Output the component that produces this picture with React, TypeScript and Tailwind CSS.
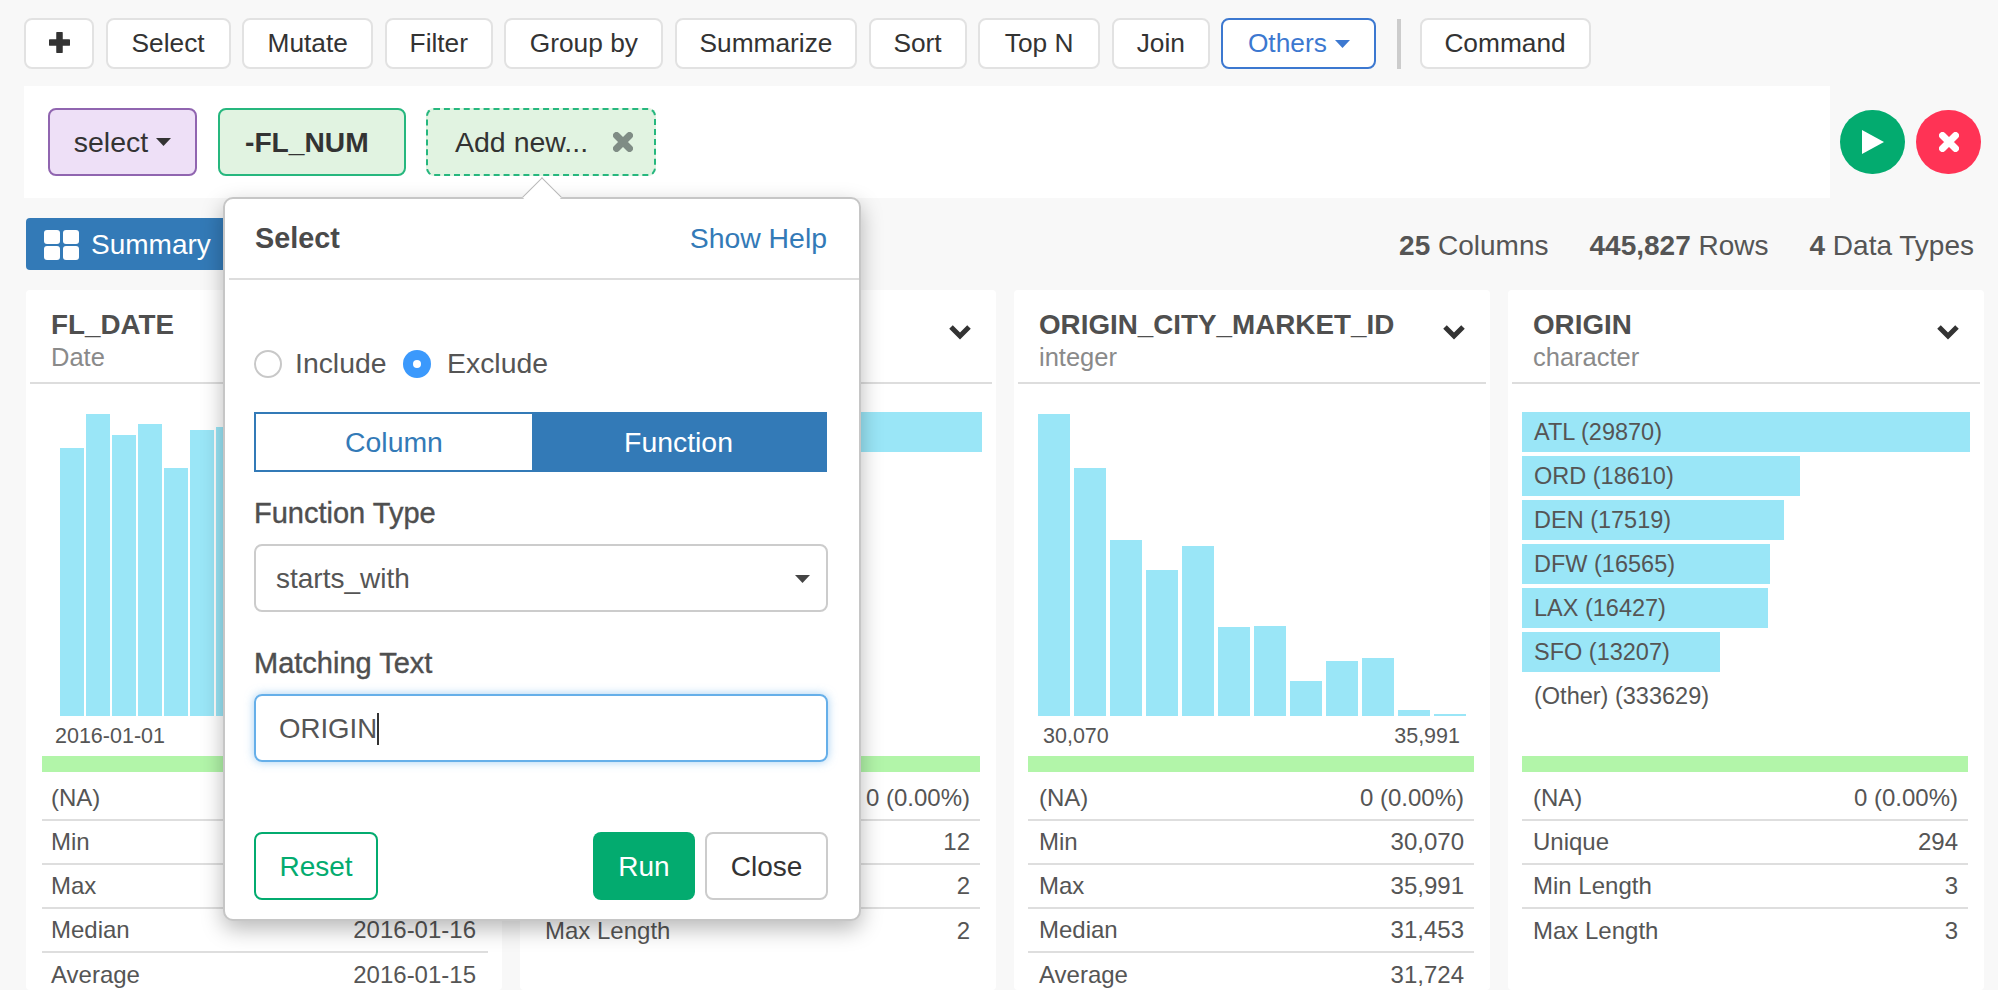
import React from "react";

const toolbar: [string, string][] = [
  ["Select", "w-[125px]"],
  ["Mutate", "w-[131px]"],
  ["Filter", "w-[108px]"],
  ["Group by", "w-[159px]"],
  ["Summarize", "w-[182px]"],
  ["Sort", "w-[98px]"],
  ["Top N", "w-[122px]"],
  ["Join", "w-[98px]"],
];

function Chevron() {
  return (
    <svg width="24" height="16" viewBox="0 0 24 16" className="shrink-0">
      <polyline points="3,3 12,12 21,3" fill="none" stroke="#333" strokeWidth="5" />
    </svg>
  );
}

function Caret({ color = "#333", w = 15, h = 8 }: { color?: string; w?: number; h?: number }) {
  return (
    <svg width={w} height={h} viewBox="0 0 15 8" className="inline-block">
      <polygon points="0,0 15,0 7.5,8" fill={color} />
    </svg>
  );
}

function Times({ color }: { color: string }) {
  return (
    <svg width="20" height="20" viewBox="0 0 20 20">
      <path d="M3.5 3.5 L16.5 16.5 M16.5 3.5 L3.5 16.5" stroke={color} strokeWidth="7" strokeLinecap="round" />
    </svg>
  );
}

function Card({
  title,
  type,
  chart,
  low,
  high,
  rows,
  first = false,
}: {
  title: string;
  type: string;
  chart: React.ReactNode;
  low?: string;
  high?: string;
  rows: [string, string][];
  first?: boolean;
}) {
  const inset = first ? "ml-[12px] mr-[10px]" : "ml-[10px] mr-[12px]";
  return (
    <div className="w-[476px] h-[700px] shrink-0 bg-white rounded-[4px] px-[4px]">
      <div className="h-[94px] border-b-2 border-[#dddddd] flex items-start justify-between pl-[21px] pr-[20px]">
        <div className="pt-[18px]">
          <div className="text-[27.8px] leading-[34px] font-bold text-[#4f4f4f]">{title}</div>
          <div className="text-[25.5px] leading-[31px] text-[#8a8a8a]">{type}</div>
        </div>
        <div className="pt-[34px]">
          <Chevron />
        </div>
      </div>
      <div className="h-[302px] mt-[30px] px-[10px] flex flex-col">{chart}</div>
      <div className="h-[40px] pl-[25px] pr-[26px] flex items-center justify-between text-[21.5px] text-[#555555]">
        <span>{low}</span>
        <span>{high}</span>
      </div>
      <div className={`${inset} h-[16px] bg-[#b2f5a9]`} />
      <div className={`${inset} mt-[5px]`}>
        {rows.map(([k, v]) => (
          <div
            key={k}
            className={`h-[44px] border-b-2 border-[#dedede] last:border-b-0 flex items-center justify-between text-[24px] text-[#555555] ${first ? "pl-[9px] pr-[12px]" : "pl-[11px] pr-[10px]"}`}
          >
            <span>{k}</span>
            <span>{v}</span>
          </div>
        ))}
      </div>
    </div>
  );
}

function Histogram({
  bars,
  width,
  gap,
}: {
  bars: number[];
  width: string;
  gap: string;
}) {
  return (
    <div className={`h-full flex items-end ${gap}`}>
      {bars.map((h, i) => (
        <div key={i} className={`${width} bg-[#9ae6f7]`} style={{ height: h }} />
      ))}
    </div>
  );
}

function HBars({ items, other }: { items: [string, number][]; other?: string }) {
  return (
    <div className="-mt-[2px] flex flex-col gap-[4px]">
      {items.map(([label, w]) => (
        <div
          key={label}
          className="h-[40px] bg-[#9ae6f7] flex items-center pl-[12px] pt-[1px] text-[23.5px] text-[#555555] whitespace-nowrap"
          style={{ width: w }}
        >
          {label}
        </div>
      ))}
      {other ? (
        <div className="h-[40px] flex items-center pl-[12px] pt-[1px] text-[23.5px] text-[#555555]">{other}</div>
      ) : null}
    </div>
  );
}

function Popover() {
  return (
    <div className="absolute left-[223px] top-[197px] w-[638px] h-[724px] bg-white border-2 border-[#c6c6c6] rounded-[10px] shadow-[0_8px_22px_rgba(0,0,0,0.28)] text-[#555555]">
      <div className="absolute left-[303px] -top-[16px] w-[28px] h-[28px] rotate-45 bg-white border-l border-t border-[#b8b8b8]" />
      <div className="relative h-[81px] border-b-2 border-[#dddddd] ml-[4px] flex items-center justify-between pl-[26px] pr-[32px]">
        <span className="text-[28.8px] font-bold text-[#4a4a4a]">Select</span>
        <span className="text-[28.4px] text-[#337ab7]">Show Help</span>
      </div>
      <div className="px-[29px]">
        <div className="mt-[68px] h-[30px] flex items-center text-[28.4px]">
          <span className="w-[28px] h-[28px] mt-[2px] rounded-full border-2 border-[#c8c8c8] bg-white" />
          <span className="ml-[13px] w-[108px]">Include</span>
          <span className="w-[28px] h-[28px] mt-[2px] rounded-full bg-[#3b99fc] flex items-center justify-center">
            <span className="w-[8px] h-[8px] rounded-full bg-white" />
          </span>
          <span className="ml-[16px]">Exclude</span>
        </div>
        <div className="mt-[34px] w-[573px] h-[60px] flex text-[28.4px] border-2 border-[#337ab7]">
          <div className="w-[276px] flex items-center justify-center text-[#337ab7] bg-white">Column</div>
          <div className="flex-1 flex items-center justify-center text-white bg-[#337ab7]">Function</div>
        </div>
        <div className="mt-[22px] h-[38px] flex items-center pt-[2px] text-[29px] text-[#4f4f4f]" style={{ WebkitTextStroke: "0.4px #4f4f4f" }}>
          Function Type
        </div>
        <div className="mt-[12px] w-[574px] h-[68px] border-2 border-[#cccccc] rounded-[8px] flex items-center justify-between pl-[20px] pr-[16px] pt-[2px] text-[28px] text-[#555555]">
          <span>starts_with</span>
          <Caret color="#444444" />
        </div>
        <div className="mt-[32px] h-[38px] flex items-center pt-[2px] text-[29px] text-[#4f4f4f]" style={{ WebkitTextStroke: "0.4px #4f4f4f" }}>
          Matching Text
        </div>
        <div className="mt-[12px] w-[574px] h-[68px] border-2 border-[#66afe9] rounded-[8px] shadow-[0_0_10px_rgba(102,175,233,0.6)] flex items-center pl-[23px] pt-[2px] text-[27.6px] text-[#555555]">
          <span>ORIGIN</span>
          <span className="w-[2px] h-[32px] bg-[#333333]" />
        </div>
        <div className="mt-[70px] w-[574px] flex items-center text-[28px]">
          <div className="w-[124px] h-[68px] rounded-[8px] border-2 border-[#03ab6f] text-[#03ab6f] flex items-center justify-center pt-[2px]">Reset</div>
          <div className="ml-auto w-[102px] h-[68px] rounded-[8px] bg-[#03ab6f] text-white flex items-center justify-center pt-[2px]">Run</div>
          <div className="ml-[10px] w-[123px] h-[68px] rounded-[8px] border-2 border-[#cccccc] text-[#333333] flex items-center justify-center pt-[2px]">Close</div>
        </div>
      </div>
    </div>
  );
}

export default function App() {
  return (
    <div
      className="relative w-[1998px] h-[990px] overflow-hidden bg-[#f8f8f8]"
      style={{ fontFamily: '"Liberation Sans", Arial, sans-serif' }}
    >
      <div className="flex items-center gap-[11.6px] pl-[24px] pt-[18px] text-[26.3px] text-[#333333]">
        <button className="w-[70px] h-[51px] bg-white border-2 border-[#e2e2e2] rounded-[8px] flex items-center justify-center pb-[2px]">
          <svg width="21" height="21" viewBox="0 0 21 21">
            <path d="M10.5 1.5 V19.5 M1.5 10.5 H19.5" stroke="#333" strokeWidth="6.5" strokeLinecap="round" />
          </svg>
        </button>
        {toolbar.map(([t, w]) => (
          <button key={t} className={`${w} h-[51px] bg-white border-2 border-[#e2e2e2] rounded-[8px]`}>
            {t}
          </button>
        ))}
        <button className="w-[155px] h-[51px] bg-white border-2 border-[#3c78d0] rounded-[8px] text-[#3c78d0] flex items-center justify-center gap-[8px]">
          Others
          <Caret color="#3c78d0" />
        </button>
        <div className="ml-[9px] w-[4px] h-[50px] bg-[#cccccc]" />
        <button className="ml-[7px] w-[171px] h-[51px] bg-white border-2 border-[#e2e2e2] rounded-[8px]">Command</button>
      </div>

      <div className="flex mt-[17px] pl-[24px]">
        <div className="w-[1806px] h-[112px] bg-white pl-[24px] pt-[22px] flex items-start text-[28.5px] text-[#333333]">
          <div className="w-[149px] h-[68px] bg-[#eee0f7] border-2 border-[#9065b0] rounded-[8px] flex items-center justify-center gap-[8px]">
            select
            <Caret color="#333" />
          </div>
          <div className="ml-[21px] w-[188px] h-[68px] bg-[#e1f3e1] border-2 border-[#26b77e] rounded-[8px] flex items-center pl-[25px] text-[28.2px] font-bold">
            -FL_NUM
          </div>
          <div className="ml-[20px] w-[230px] h-[68px] bg-[#e1f3e1] border-2 border-dashed border-[#26b77e] rounded-[8px] flex items-center pl-[27px] gap-[25px]">
            Add new...
            <Times color="#7f8c85" />
          </div>
        </div>
        <div className="ml-[10px] mt-[24px] flex gap-[11px]">
          <div className="w-[65px] h-[64px] rounded-full bg-[#03ab6f] flex items-center justify-center">
            <svg width="22" height="24" viewBox="0 0 22 24" className="ml-[1px]">
              <polygon points="0,0 22,12 0,24" fill="#fff" />
            </svg>
          </div>
          <div className="w-[65px] h-[64px] rounded-full bg-[#ff3355] flex items-center justify-center">
            <Times color="#ffffff" />
          </div>
        </div>
      </div>

      <div className="mt-[20px] pl-[26px] pr-[24px] h-[52px] flex items-center justify-between">
        <div className="w-[240px] h-[52px] bg-[#337ab7] rounded-[4px] flex items-center pl-[18px] gap-[12px] pt-[1px] text-[28px] text-white">
          <svg width="35" height="30" viewBox="0 0 35 30">
            <rect x="0" y="0" width="16" height="14" rx="3" fill="#fff" />
            <rect x="19" y="0" width="16" height="14" rx="3" fill="#fff" />
            <rect x="0" y="16" width="16" height="14" rx="3" fill="#fff" />
            <rect x="19" y="16" width="16" height="14" rx="3" fill="#fff" />
          </svg>
          Summary
        </div>
        <div className="flex items-center gap-[41px] text-[28px] text-[#555555] pt-[4px]">
          <span><b>25</b> Columns</span>
          <span><b>445,827</b> Rows</span>
          <span><b>4</b> Data Types</span>
        </div>
      </div>

      <div className="mt-[20px] pl-[26px] flex gap-[18px]">
        <Card
          first
          title="FL_DATE"
          type="Date"
          low="2016-01-01"
          high="2016-01-31"
          chart={
            <div className="pl-[20px] h-full">
              <Histogram bars={[268, 302, 281, 292, 248, 286, 289, 270, 260, 280, 290, 250, 270, 280, 260, 240]} width="w-[24px]" gap="gap-[2px]" />
            </div>
          }
          rows={[
            ["(NA)", "0 (0.00%)"],
            ["Min", "2016-01-01"],
            ["Max", "2016-01-31"],
            ["Median", "2016-01-16"],
            ["Average", "2016-01-15"],
          ]}
        />
        <Card
          title="UNIQUE_CARRIER"
          type="character"
          chart={<HBars items={[["AA (87000)", 448], ["DL (80000)", 280], ["WN (70000)", 260], ["UA (40000)", 200], ["OO (30000)", 150], ["EV (20000)", 120]]} other="(Other) (118827)" />}
          rows={[
            ["(NA)", "0 (0.00%)"],
            ["Unique", "12"],
            ["Min Length", "2"],
            ["Max Length", "2"],
          ]}
        />
        <Card
          title="ORIGIN_CITY_MARKET_ID"
          type="integer"
          low="30,070"
          high="35,991"
          chart={
            <div className="pl-[10px] h-full">
              <Histogram bars={[302, 248, 176, 146, 170, 89, 90, 35, 55, 58, 6, 2]} width="w-[32px]" gap="gap-[4px]" />
            </div>
          }
          rows={[
            ["(NA)", "0 (0.00%)"],
            ["Min", "30,070"],
            ["Max", "35,991"],
            ["Median", "31,453"],
            ["Average", "31,724"],
          ]}
        />
        <Card
          title="ORIGIN"
          type="character"
          chart={
            <HBars
              items={[
                ["ATL (29870)", 448],
                ["ORD (18610)", 278],
                ["DEN (17519)", 262],
                ["DFW (16565)", 248],
                ["LAX (16427)", 246],
                ["SFO (13207)", 198],
              ]}
              other="(Other) (333629)"
            />
          }
          rows={[
            ["(NA)", "0 (0.00%)"],
            ["Unique", "294"],
            ["Min Length", "3"],
            ["Max Length", "3"],
          ]}
        />
      </div>

      <Popover />
    </div>
  );
}
